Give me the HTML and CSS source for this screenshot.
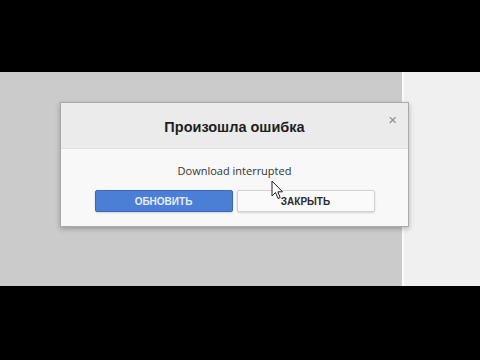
FILE: index.html
```html
<!DOCTYPE html>
<html>
<head>
    <title>Произошла ошибка</title>
    <link rel="stylesheet" href="styles.css">
</head>
<body>
    <div class="bar"></div>
    <div class="stage">
        <div class="page-left"></div>
        <div class="divider"></div>
        <div class="page-right"></div>

        <div class="dialog">
            <div class="dialog-header">
                <h2>Произошла ошибка</h2>
                <span class="close">&times;</span>
            </div>
            <div class="dialog-body">
                <p class="message">Download interrupted</p>
                <div class="actions">
                    <button class="btn btn-primary">ОБНОВИТЬ</button>
                    <button class="btn">ЗАКРЫТЬ</button>
                </div>
            </div>
        </div>

        <svg class="cursor" width="13" height="20" viewBox="0 0 13 20">
            <path d="M1 1 L1 16 L4.5 12.5 L7 18.5 L9.2 17.6 L6.8 11.8 L11.5 11.8 Z" fill="#fff" stroke="#222" stroke-width="1" stroke-linejoin="round"/>
        </svg>
    </div>
    <div class="bar bar-bottom"></div>
</body>
</html>
```

FILE: styles.css
```css
body {
    margin: 0;
    background-color: #000;
    font-family: "Liberation Sans", Arial, sans-serif;
}
.bar {
    height: 72px;
    background-color: #000;
}
.bar-bottom {
    height: 74px;
}
.stage {
    position: relative;
    display: flex;
    height: 214px;
}
.page-left {
    width: 402px;
    background-color: #cbcbcb;
}
.divider {
    width: 2px;
    background-color: #fafafa;
}
.page-right {
    flex: 1;
    background-color: #f0f0f0;
}
.dialog {
    position: absolute;
    left: 60px;
    top: 30px;
    width: 347px;
    border: 1px solid #a9a9a9;
    box-shadow: 0 2px 5px rgba(0, 0, 0, 0.25);
    background-color: #f8f8f8;
}
.dialog-header {
    position: relative;
    height: 45px;
    background-color: #ebebeb;
    border-bottom: 1px solid #e0e0e0;
    display: flex;
    align-items: center;
    justify-content: center;
}
.dialog-header h2 {
    margin: 3px 0 0 0;
    font-family: "Liberation Sans", Arial, sans-serif;
    font-size: 14.5px;
    font-weight: bold;
    color: #1e1e1e;
}
.close {
    position: absolute;
    right: 11px;
    top: 8px;
    font-size: 15px;
    color: #8a8a8a;
}
.dialog-body {
    height: 77px;
    display: flex;
    flex-direction: column;
    align-items: center;
}
.message {
    margin: 14px 0 0 0;
    font-family: "Open Sans", sans-serif;
    font-size: 11px;
    color: #333;
}
.actions {
    display: flex;
    gap: 4px;
    margin-top: 12px;
}
.btn {
    width: 138px;
    height: 22px;
    padding: 0;
    font-family: "Liberation Sans", Arial, sans-serif;
    font-size: 10px;
    font-weight: bold;
    color: #2b2b2b;
    background-color: #fafafa;
    border: 1px solid #d2d2d2;
    border-radius: 2px;
    box-shadow: 0 1px 2px rgba(0, 0, 0, 0.15);
}
.btn-primary {
    color: #e6edfb;
    background-color: #4b7fd6;
    border-color: #3a68bd;
}
.cursor {
    position: absolute;
    left: 271px;
    top: 108px;
}
```
